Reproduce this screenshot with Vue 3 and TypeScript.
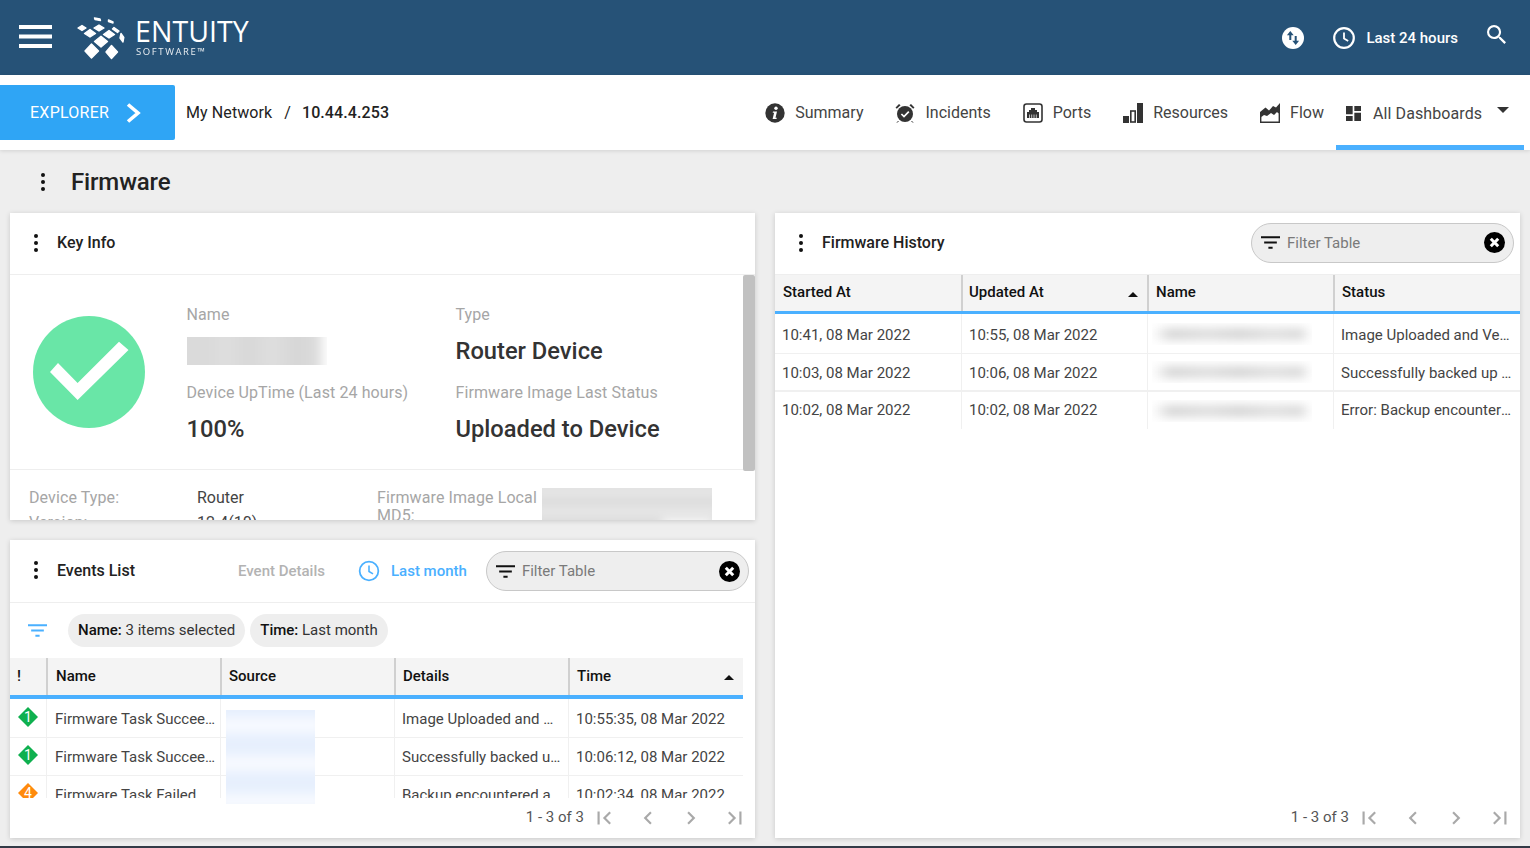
<script setup lang="ts">
interface EventRow { sev: string; color: string; name: string; details: string; time: string }
interface HistRow { started: string; updated: string; status: string }

const dashTabs = ['Summary', 'Incidents', 'Ports', 'Resources', 'Flow']
const keyFacts = [
  { id: 'name', label: 'Name', value: '' },
  { id: 'type', label: 'Type', value: 'Router Device' },
  { id: 'uptime', label: 'Device UpTime (Last 24 hours)', value: '100%' },
  { id: 'status', label: 'Firmware Image Last Status', value: 'Uploaded to Device' },
]
const eventCols = ['!', 'Name', 'Source', 'Details', 'Time']
const events: EventRow[] = [
  { sev: '1', color: '#0fb04f', name: 'Firmware Task Succeeded', details: 'Image Uploaded and Verified', time: '10:55:35, 08 Mar 2022' },
  { sev: '1', color: '#0fb04f', name: 'Firmware Task Succeeded', details: 'Successfully backed up image', time: '10:06:12, 08 Mar 2022' },
  { sev: '4', color: '#ff8a0c', name: 'Firmware Task Failed', details: 'Backup encountered a', time: '10:02:34, 08 Mar 2022' },
]
const histCols = ['Started At', 'Updated At', 'Name', 'Status']
const history: HistRow[] = [
  { started: '10:41, 08 Mar 2022', updated: '10:55, 08 Mar 2022', status: 'Image Uploaded and Verified' },
  { started: '10:03, 08 Mar 2022', updated: '10:06, 08 Mar 2022', status: 'Successfully backed up image' },
  { started: '10:02, 08 Mar 2022', updated: '10:02, 08 Mar 2022', status: 'Error: Backup encountered a' },
]
const filterPath = 'M10 18h4v-2h-4v2zM3 6v2h18V6H3zm3 7h12v-2H6v2z'
const pagerPaths = [
  'M18.41 16.59L13.82 12l4.59-4.59L17 6l-6 6 6 6zM6 6h2v12H6z',
  'M15.41 7.41L14 6l-6 6 6 6 1.41-1.41L10.83 12z',
  'M8.59 16.59L10 18l6-6-6-6-1.41 1.41L13.17 12z',
  'M5.59 7.41L10.18 12l-4.59 4.59L7 18l6-6-6-6zM16 6h2v12h-2z',
]
</script>

<template>
  <div class="page">
    <header class="topbar">
      <svg class="burger" viewBox="0 0 33 24" width="33" height="24">
        <rect y="0" width="33" height="4" fill="#fff" />
        <rect y="9.5" width="33" height="4" fill="#fff" />
        <rect y="19" width="33" height="4" fill="#fff" />
      </svg>
      <svg class="logo-mark" viewBox="76 15 50 45" width="50" height="45">
        <g fill="#fff" stroke="#fff" stroke-width="1.4" stroke-linejoin="round">
          <polygon points="90.5,44 97.5,51 90.5,58 84,51" />
          <polygon points="110.5,45.5 116.5,52 110.5,58.5 105,52" />
          <polygon points="100,36.3 106.5,41.5 100,47 93.5,41.5" />
          <polygon points="89,29.5 94.5,33.5 89,37 83.5,33.5" />
          <polygon points="108,30.5 113.5,34.5 108,38 102.5,34.5" />
          <polygon points="98,25 103,28 98,31 93,28" />
          <polygon points="81,25.5 85,28 81,30.5 77,28" />
          <polygon points="113,27.5 118,31 116.5,32.5 111.5,29" />
          <polygon points="93.5,18 99,19 99.5,20.5 94,19.5" />
          <polygon points="107.5,20 112,22 112,23 107.5,21.5" />
          <polygon points="120,33.5 122.8,37.5 122,42 119,38" />
        </g>
      </svg>
      <div class="brand">
        <span class="brand-main">ENTUITY</span>
        <span class="brand-sub">SOFTWARE™</span>
      </div>
      <div class="top-actions">
        <svg class="swap-icon" viewBox="0 0 22 22" width="22" height="22">
          <circle cx="11" cy="11" r="11" fill="#fff" />
          <path d="M8.3 4 4.9 8.2h2.4V13h2V8.2h2.4zM13.7 18l3.4-4.2h-2.4V9h-2v4.8h-2.4z" fill="#265277" />
        </svg>
        <svg class="clock-icon" viewBox="0 0 24 24" width="24" height="24">
          <circle cx="12" cy="12" r="9.8" fill="none" stroke="#fff" stroke-width="2.2" />
          <path d="M12 6.5V12.6l4.2 2.4" fill="none" stroke="#fff" stroke-width="1.8" />
        </svg>
        <span class="range">Last 24 hours</span>
        <svg class="search-icon" viewBox="3 3 17.5 17.5" width="19" height="19">
          <path d="M15.5 14h-.79l-.28-.27A6.471 6.471 0 0 0 16 9.5 6.5 6.5 0 1 0 9.5 16c1.61 0 3.09-.59 4.23-1.57l.27.28v.79l5 4.99L20.49 19l-4.99-5zm-6 0C7.01 14 5 11.99 5 9.5S7.01 5 9.5 5 14 7.01 14 9.5 11.99 14 9.5 14z" fill="#fff" />
        </svg>
      </div>
    </header>

    <nav class="navbar">
      <div class="explorer">
        <span>EXPLORER</span>
        <svg viewBox="0 0 15 20" width="15" height="20">
          <path d="M2 1.5 12 10 2 18.5" fill="none" stroke="#fff" stroke-width="3.6" />
        </svg>
      </div>
      <div class="crumbs">
        <span>My Network</span>
        <span class="crumb-sep">/</span>
        <span class="crumb-current">10.44.4.253</span>
      </div>
      <div class="tabs">
        <div v-for="t in dashTabs" :key="t" class="tab">
          <svg v-if="t === 'Summary'" viewBox="0 0 20 20" width="20" height="20">
            <circle cx="10" cy="10" r="9.7" fill="#333" />
            <circle cx="11" cy="5.3" r="1.7" fill="#fff" />
            <path d="M8 8.4h4l-1.5 6.3h1.3l-.3 1.3H7.6l1.5-6.3H7.7z" fill="#fff" />
          </svg>
          <svg v-else-if="t === 'Incidents'" viewBox="0 0 20 20" width="20" height="20">
            <circle cx="10" cy="11" r="8" fill="#333" />
            <path d="M6.4 11 9 13.6 13.8 8.6" fill="none" stroke="#fff" stroke-width="1.7" />
            <path d="M.5 4.5 4 1l1.6 1.2L1.8 5.8zM19.5 4.5 16 1l-1.6 1.2 3.8 3.6z" fill="#333" />
            <path d="M3.5 18 2 19.6M16.5 18 18 19.6" stroke="#333" stroke-width="1" />
          </svg>
          <svg v-else-if="t === 'Ports'" viewBox="0 0 20 20" width="20" height="20">
            <rect x="1" y="1" width="18" height="18" rx="2.5" fill="#fff" stroke="#333" stroke-width="1.6" />
            <path d="M8 5h4v2h2v2h2v6H4V9h2V7h2z" fill="#333" />
            <path d="M6.5 11.5v3.5M8.7 11.5v3.5M11 11.5v3.5M13.3 11.5v3.5" stroke="#fff" stroke-width=".7" />
          </svg>
          <svg v-else-if="t === 'Resources'" viewBox="0 0 20 20" width="20" height="20">
            <rect x="0" y="13" width="6" height="7" fill="#333" />
            <rect x="7.8" y="8" width="4.4" height="11" fill="#fff" stroke="#333" stroke-width="1.6" />
            <rect x="14" y="0" width="6" height="20" fill="#333" />
          </svg>
          <svg v-else viewBox="0 0 20 20" width="20" height="20">
            <path d="M0 9 5.5 4.5 9 7.5 13 3 16 4.5 20 0V12L17 9l-3 3-3-2-4 3-3-1-4 3z" fill="#333" />
            <path d="M.7 14V19.3H19.3V11" fill="none" stroke="#333" stroke-width="1.4" />
          </svg>
          <span>{{ t }}</span>
        </div>
        <div class="tab-active">
          <svg viewBox="3 3 18 18" width="15" height="15">
            <path d="M3 13h8V3H3v10zm0 8h8v-6H3v6zm10 0h8V11h-8v10zm0-18v6h8V3h-8z" fill="#333" />
          </svg>
          <span>All Dashboards</span>
          <i class="tab-caret"></i>
        </div>
      </div>
    </nav>

    <div class="title-row">
      <span class="dots"><b></b><b></b><b></b></span>
      <h1>Firmware</h1>
    </div>

    <main class="columns">
      <div class="left-col">
        <section class="panel key-panel">
          <div class="panel-head">
            <span class="dots"><b></b><b></b><b></b></span>
            <h2>Key Info</h2>
          </div>
          <div class="key-body">
            <div class="key-top">
              <svg class="ok-icon" viewBox="0 0 112 112" width="112" height="112">
                <circle cx="56" cy="56" r="56" fill="#69e6a7" />
                <polygon points="25,47 17,56 44.6,84 95.5,34 86,25.7 44.6,67" fill="#fff" />
              </svg>
              <div class="facts">
                <div v-for="f in keyFacts" :key="f.id" class="fact">
                  <div class="fact-label">{{ f.label }}</div>
                  <div v-if="f.id === 'name'" class="redact redact-name"><i></i></div>
                  <div v-else class="fact-value">{{ f.value }}</div>
                </div>
              </div>
            </div>
            <div class="key-bottom">
              <div class="kv-left">
                <span class="kv-label">Device Type:</span><span class="kv-value">Router</span>
                <span class="kv-label">Version:</span><span class="kv-value">12.4(10)</span>
              </div>
              <div class="kv-right">
                <span class="kv-label md5">Firmware Image Local MD5:</span>
                <div class="redact redact-md5"><i></i></div>
              </div>
            </div>
            <div class="scroll-thumb"></div>
          </div>
        </section>

        <section class="panel events-panel">
          <div class="panel-head events-head">
            <span class="dots"><b></b><b></b><b></b></span>
            <h2>Events List</h2>
            <span class="event-details">Event Details</span>
            <svg class="blue-clock" viewBox="0 0 24 24" width="22" height="22">
              <circle cx="12" cy="12" r="10.2" fill="none" stroke="#4ab0ff" stroke-width="1.9" />
              <path d="M12 6V12.6l4.4 2.5" fill="none" stroke="#4ab0ff" stroke-width="1.7" />
            </svg>
            <span class="last-month">Last month</span>
            <div class="filter-field">
              <svg viewBox="3 6 18 12" width="19" height="13"><path :d="filterPath" fill="#111" /></svg>
              <span>Filter Table</span>
              <svg class="clear" viewBox="0 0 21 21" width="21" height="21">
                <circle cx="10.5" cy="10.5" r="10.5" fill="#000" />
                <path d="M6.8 6.8 14.2 14.2M14.2 6.8 6.8 14.2" stroke="#fff" stroke-width="3" />
              </svg>
            </div>
          </div>
          <div class="chips">
            <svg class="chip-filter" viewBox="3 6 18 12" width="19" height="13"><path :d="filterPath" fill="#4ab0ff" /></svg>
            <span class="chip"><b>Name:</b> 3 items selected</span>
            <span class="chip"><b>Time:</b> Last month</span>
          </div>
          <div class="events-table">
            <div class="ev-row ev-header">
              <div v-for="c in eventCols" :key="c" class="th">
                <span>{{ c }}</span>
                <i v-if="c === 'Time'" class="sort"></i>
              </div>
            </div>
            <div class="ev-body">
              <div v-for="(e, i) in events" :key="i" class="ev-row ev-line">
                <div class="td sev">
                  <svg viewBox="0 0 20 20" width="20" height="20">
                    <polygon points="10,0 20,10 10,20 0,10" :fill="e.color" />
                    <text x="10" y="14.5" text-anchor="middle" class="sev-num">{{ e.sev }}</text>
                  </svg>
                </div>
                <div class="td td-name">{{ e.name }}</div>
                <div class="td"></div>
                <div class="td td-details">{{ e.details }}</div>
                <div class="td">{{ e.time }}</div>
              </div>
            </div>
          </div>
          <div class="redact redact-source"><i></i></div>
          <div class="pager">
            <span>1 - 3 of 3</span>
            <svg v-for="p in pagerPaths" :key="p" viewBox="0 0 24 24" width="26" height="26"><path :d="p" fill="#a9a9a9" /></svg>
          </div>
        </section>
      </div>

      <section class="panel history-panel">
        <div class="panel-head history-head">
          <span class="dots"><b></b><b></b><b></b></span>
          <h2>Firmware History</h2>
          <div class="filter-field">
            <svg viewBox="3 6 18 12" width="19" height="13"><path :d="filterPath" fill="#111" /></svg>
            <span>Filter Table</span>
            <svg class="clear" viewBox="0 0 21 21" width="21" height="21">
              <circle cx="10.5" cy="10.5" r="10.5" fill="#000" />
              <path d="M6.8 6.8 14.2 14.2M14.2 6.8 6.8 14.2" stroke="#fff" stroke-width="3" />
            </svg>
          </div>
        </div>
        <div class="hist-row hist-header">
          <div v-for="c in histCols" :key="c" class="th">
            <span>{{ c }}</span>
            <i v-if="c === 'Updated At'" class="sort"></i>
          </div>
        </div>
        <div v-for="(h, i) in history" :key="i" class="hist-row hist-line" :class="`hist-line-${i}`">
          <div class="td">{{ h.started }}</div>
          <div class="td">{{ h.updated }}</div>
          <div class="td name-cell"><div class="redact redact-hist"><i></i></div></div>
          <div class="td">{{ h.status }}</div>
        </div>
        <div class="pager history-pager">
          <span>1 - 3 of 3</span>
          <svg v-for="p in pagerPaths" :key="p" viewBox="0 0 24 24" width="26" height="26"><path :d="p" fill="#a9a9a9" /></svg>
        </div>
      </section>
    </main>
  </div>
</template>

<style scoped>
.page {
  height: 848px;
  overflow: hidden;
  background: #eeeeee;
  font-family: Roboto, "Liberation Sans", sans-serif;
  color: #333;
  border-bottom: 2px solid #333b47;
  box-sizing: border-box;
  display: flex;
  flex-direction: column;
}
.topbar {
  flex: 0 0 75px;
  background: #265277;
  display: flex;
  align-items: center;
  color: #fff;
}
.burger { margin: 0 0 2px 19px; }
.logo-mark { margin: 0 0 0 25px; }
.brand { display: flex; flex-direction: column; margin: 0 0 0 8px; }
.brand-main { font-family: "Open Sans", sans-serif; font-size: 28.5px; line-height: 26px; letter-spacing: .05px; }
.brand-sub { font-family: "Open Sans", sans-serif; font-size: 9.5px; line-height: 13px; letter-spacing: 1.6px; margin: 1px 0 0 1px; opacity: .9; }
.top-actions { margin-left: auto; display: flex; align-items: center; padding-right: 24px; }
.clock-icon { margin-left: 28px; }
.range { font-size: 15px; font-weight: 500; margin-left: 10px; }
.search-icon { margin: 0 0 6px 29px; }

.navbar {
  flex: 0 0 75px;
  background: #fff;
  display: flex;
  box-shadow: 0 1px 4px rgba(0, 0, 0, .12);
  position: relative;
}
.explorer {
  align-self: flex-start;
  margin-top: 10px;
  width: 175px;
  height: 55px;
  box-sizing: border-box;
  padding-left: 30px;
  background: #2fa5f5;
  border-radius: 0 2px 2px 0;
  color: #fff;
  font-size: 16px;
  letter-spacing: .25px;
  display: flex;
  align-items: center;
  gap: 17px;
}
.crumbs { margin: 28px 0 0 11px; font-size: 16px; line-height: 19px; display: flex; color: #222; }
.crumbs span:first-child { letter-spacing: .1px; }
.crumb-sep { margin: 0 11px 0 12px; }
.crumb-current { font-weight: 500; letter-spacing: .1px; }
.tabs { margin-left: auto; display: flex; padding-right: 6px; }
.tab { display: flex; align-items: flex-start; gap: 10px; margin-left: 32px; padding-top: 28px; font-size: 16px; line-height: 19px; color: #444; }
.tab-active {
  margin-left: 12px;
  width: 188px;
  box-sizing: border-box;
  padding: 29px 0 0 10px;
  border-bottom: 5px solid #4ab0ff;
  display: flex;
  align-items: flex-start;
  font-size: 16px;
  line-height: 19px;
  color: #444;
  letter-spacing: .1px;
}
.tab-active svg { margin: 2px 12px 0 0; }
.tab-caret {
  margin: 3px 0 0 15px;
  border-left: 6px solid transparent;
  border-right: 6px solid transparent;
  border-top: 6px solid #333;
}

.title-row { flex: 0 0 63px; display: flex; align-items: center; padding-left: 41px; }
.title-row h1 { margin: 0 0 0 26px; font-size: 24px; font-weight: 500; color: #222; letter-spacing: -.15px; }
.dots { display: inline-flex; flex-direction: column; gap: 3px; width: 4px; }
.dots b { width: 4px; height: 4px; border-radius: 50%; background: #111; }

.columns { display: grid; grid-template-columns: 745px 745px; gap: 20px; padding: 0 10px; }
.left-col { display: flex; flex-direction: column; gap: 20px; }
.panel { background: #fff; box-shadow: 0 1px 5px rgba(0, 0, 0, .16); position: relative; overflow: hidden; }
.panel-head { border-bottom: 1px solid #eee; display: flex; align-items: center; padding: 0 0 2px 24px; height: 59px; }
.panel-head h2 { margin: 0 0 0 19px; font-size: 16px; font-weight: 500; color: #222; }

.key-panel { height: 307px; }
.key-body { position: relative; height: 245px; overflow: hidden; }
.key-top { height: 194px; border-bottom: 1px solid #eee; display: flex; }
.ok-icon { margin: 41px 0 0 23px; }
.facts { margin: 28px 0 0 41.5px; display: grid; grid-template-columns: 269px 269px; grid-auto-rows: 78px; }
.fact-label { font-size: 16px; line-height: 24px; color: #a6a6a6; letter-spacing: .1px; }
.fact-value { margin-top: 8px; font-size: 23.7px; line-height: 32px; font-weight: 500; color: #333; }
.redact { overflow: hidden; }
.redact i { display: block; filter: blur(5px); margin: -10px; width: calc(100% + 20px); height: calc(100% + 20px); }
.redact-name { margin-top: 10px; width: 140px; height: 28px; }
.redact-name i {
  background: linear-gradient(90deg, #dadada 0 20%, #dedede 30%, #d8d8d8 45%, #dedede 60%, #d6d6d6 75%, #dcdcdc 88%, #fff 93%);
}
.key-bottom { display: flex; padding: 19px 0 0 19px; font-size: 16px; line-height: 18px; }
.kv-left { width: 348px; display: grid; grid-template-columns: 168px 1fr; grid-auto-rows: 25px; }
.kv-label { color: #a6a6a6; letter-spacing: .1px; }
.kv-value { color: #444; }
.kv-right { display: flex; }
.md5 { width: 165px; }
.redact-md5 { width: 170px; height: 50px; margin-top: -1px; }
.redact-md5 i {
  background:
    linear-gradient(#fff, #fff) right 10px bottom 14px / 50px 14px no-repeat,
    repeating-linear-gradient(180deg, #dcdcdc 0 8px, #eeeeee 13px, #dcdcdc 20px);
}
.scroll-thumb { position: absolute; right: 0; top: 0; width: 12px; height: 196px; border-radius: 2px; background: #c1c1c1; }

.events-panel { height: 298px; }
.events-head { height: 62px; padding-bottom: 0; }
.events-head h2, .events-head .dots { margin-bottom: 2px; }
.event-details { margin-left: 103px; font-size: 15px; font-weight: 500; color: #b3b3b3; }
.blue-clock { margin-left: 33px; }
.last-month { margin-left: 11px; font-size: 15px; font-weight: 500; color: #4ab0ff; }
.filter-field {
  width: 263px;
  height: 40px;
  box-sizing: border-box;
  margin-left: 19px;
  padding: 0 8px 0 9px;
  border: 1px solid #c8c8c8;
  border-radius: 20px;
  background: #eee;
  display: flex;
  align-items: center;
  font-size: 15px;
  color: #7a7a7a;
}
.filter-field span { margin-left: 7px; }
.clear { margin-left: auto; }
.chips { height: 55px; display: flex; align-items: center; }
.chip-filter { margin-left: 18px; margin-right: 21px; }
.chip { height: 33px; line-height: 33px; padding: 0 10px; border-radius: 17px; background: #eee; font-size: 15px; color: #333; margin-right: 5px; }
.chip b { font-weight: 500; color: #111; }
.events-table { width: 733px; }
.ev-row { display: grid; grid-template-columns: 36px 174px 174px 174px 175px; }
.ev-header { height: 37px; background: #f4f4f4; border-bottom: 4px solid #4ab0ff; }
.th {
  display: flex;
  align-items: center;
  justify-content: space-between;
  padding: 0 8px 2px 7px;
  font-size: 15px;
  font-weight: 500;
  color: #111;
  border-left: 2px solid #d0d0d0;
  box-sizing: border-box;
}
.th:first-child { border-left: 0; padding-left: 7px; }
.ev-header .th:nth-child(2) { padding-left: 8px; }
.sort { border-left: 5px solid transparent; border-right: 5px solid transparent; border-bottom: 5px solid #111; margin: 4px 1px 0 0; }
.ev-body { height: 99px; overflow: hidden; }
.ev-line { height: 38px; border-bottom: 1px solid #f0f0f0; box-sizing: border-box; }
.ev-line:first-child { height: 39px; }
.td {
  padding: 0 5px 0 7px;
  font-size: 15px;
  line-height: 38px;
  color: #444;
  white-space: nowrap;
  overflow: hidden;
  text-overflow: ellipsis;
  border-left: 1px solid #f0f0f0;
  box-sizing: border-box;
}
.ev-line:first-child .td { line-height: 40px; }
.td:first-child { border-left: 0; }
.ev-line .td-name { padding: 0 2px 0 8px; }
.ev-line .td-details { padding-right: 7.5px; }
.ev-line .td.sev { padding: 7px 0 0 8px; line-height: 0; overflow: visible; }
.ev-line:first-child .td.sev { padding-top: 8px; }
.sev-num { font-family: Roboto, sans-serif; font-size: 14px; fill: #fff; }
.redact-source { position: absolute; left: 216px; top: 170px; width: 89px; height: 94px; }
.redact-source i { background: repeating-linear-gradient(180deg, #e6effd 0 12px, #fbfcff 26px, #e6effd 38px); }
.pager {
  position: absolute;
  right: 7px;
  bottom: 7px;
  display: flex;
  align-items: center;
  font-size: 15px;
  color: #555;
}
.pager span { margin-right: 7px; margin-bottom: 2px; }
.pager svg + svg { margin-left: 17.7px; }
.history-panel { height: 625px; }
.history-head .filter-field { margin-left: auto; margin-right: 6px; }
.history-head .filter-field span { margin-top: 1px; }
.hist-row { display: grid; grid-template-columns: 186px 186px 186px 187px; }
.hist-header { height: 36px; background: #f4f4f4; border-bottom: 3px solid #4ab0ff; }
.hist-header .th:first-child { padding-left: 8px; }
.hist-header .th:nth-child(2) { padding-left: 6px; }
.hist-line .td { padding: 0 7px; }
.hist-line-0 { height: 40px; border-bottom: 1px solid #f0f0f0; box-sizing: border-box; }
.hist-line-0 .td { line-height: 42px; }
.hist-line-1 { height: 38px; border-bottom: 2px solid #f0f0f0; box-sizing: border-box; }
.hist-line-1 .td { line-height: 38px; }
.hist-line-2 { height: 37px; }
.hist-line-2 .td { line-height: 36px; }
.hist-line .name-cell { padding: 0; display: flex; align-items: center; overflow: hidden; }
.redact-hist { width: 160px; height: 22px; margin-left: 4px; }
.redact-hist i {
  filter: blur(4px);
  margin: 0;
  width: 100%;
  height: 100%;
  background:
    linear-gradient(90deg, #fff 0, rgba(255, 255, 255, 0) 12%, rgba(255, 255, 255, .2) 35%, rgba(255, 255, 255, 0) 55%, rgba(255, 255, 255, .25) 75%, rgba(255, 255, 255, .1) 92%, #fff 100%),
    linear-gradient(180deg, #fff 10%, #d6d6d6 35%, #d6d6d6 65%, #fff 90%);
}
</style>

<style>
html, body { margin: 0; background: #eeeeee; }
</style>
